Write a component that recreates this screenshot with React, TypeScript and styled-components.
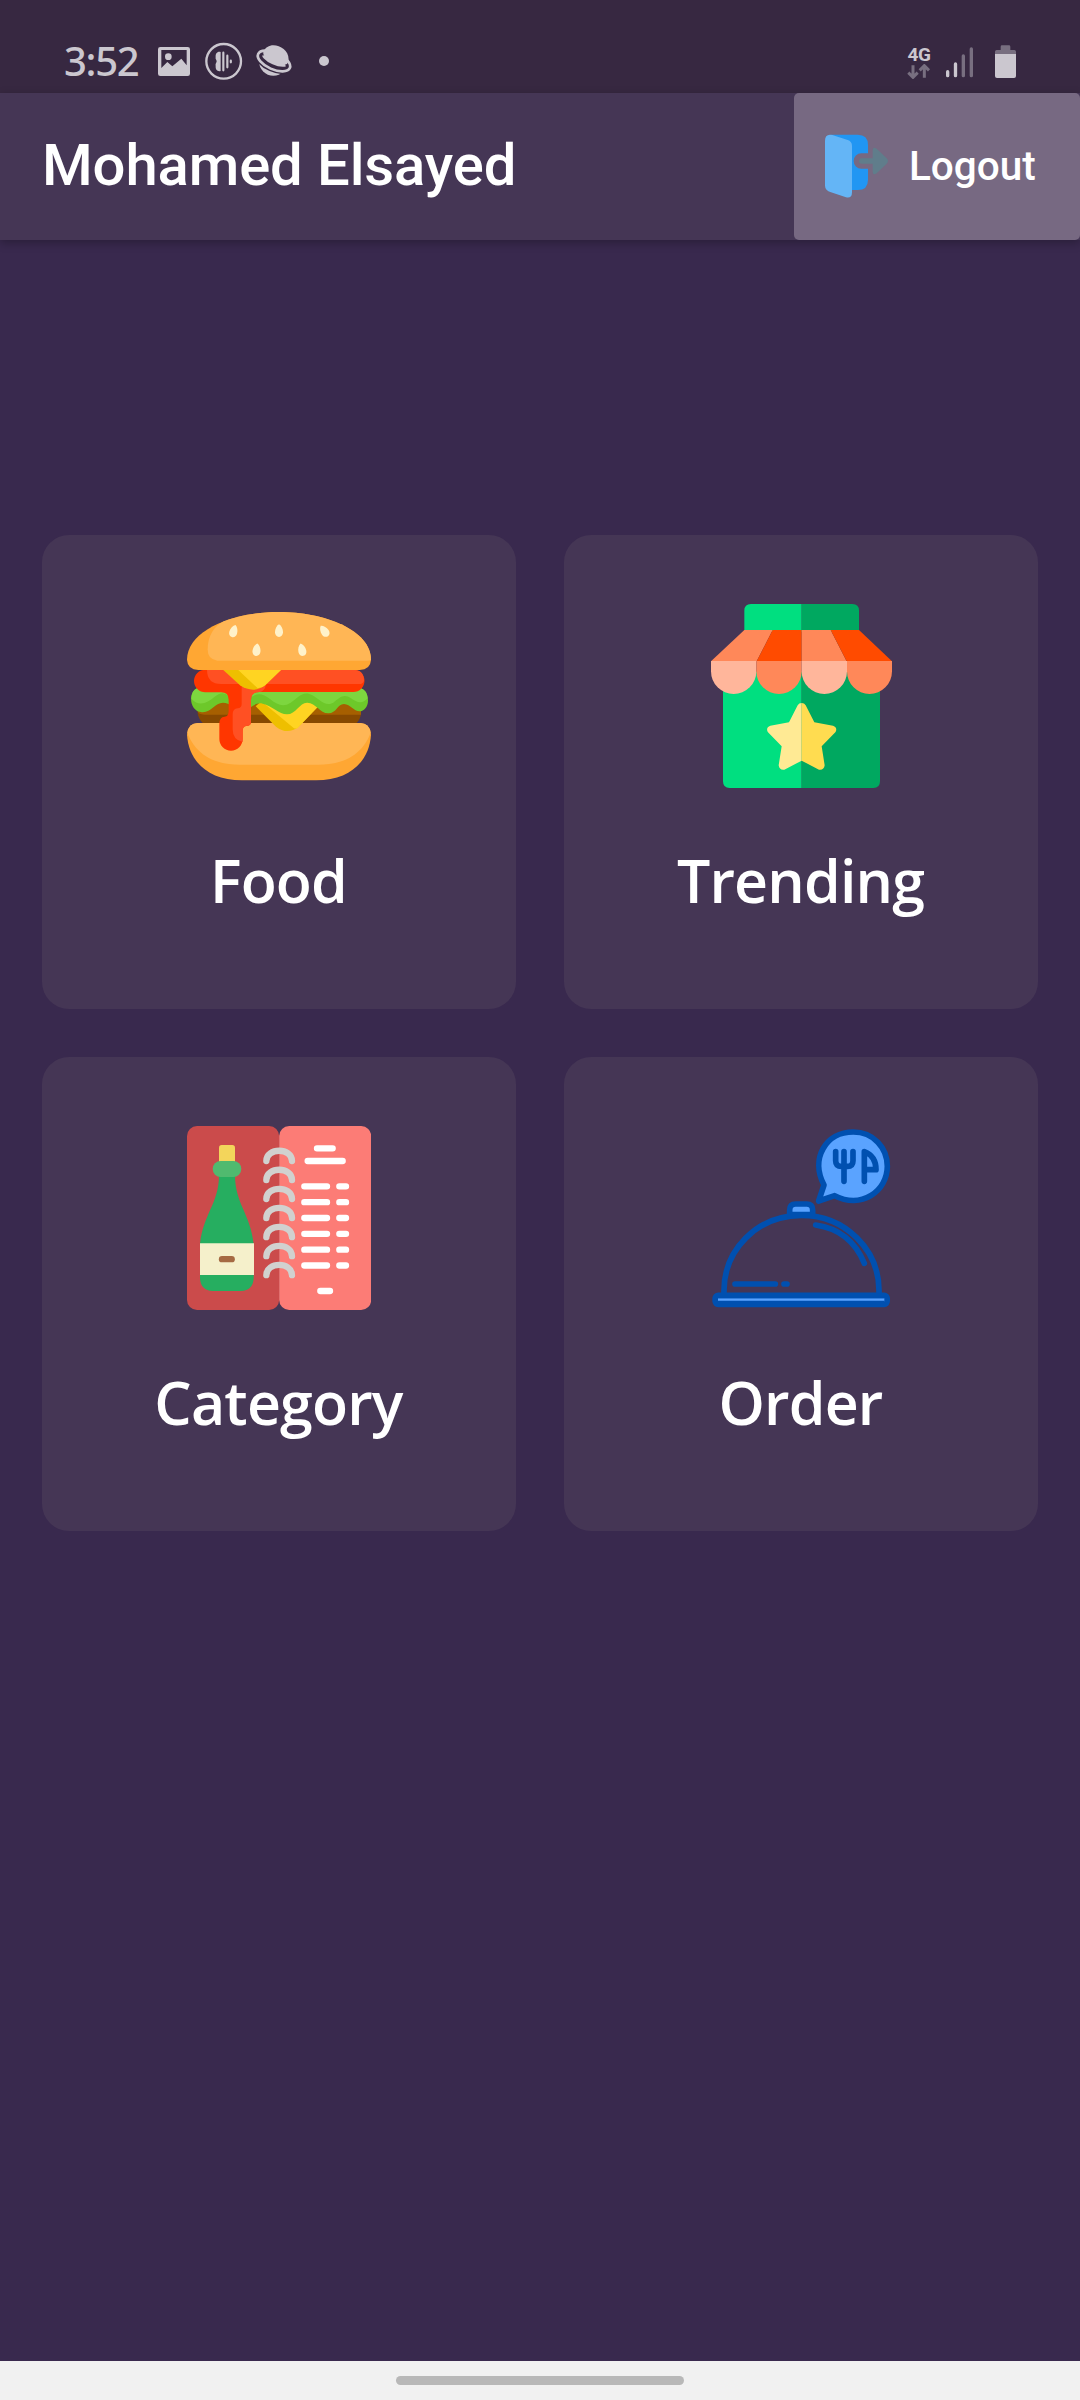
import React from 'react';
import styled, { createGlobalStyle } from 'styled-components';

const Global = createGlobalStyle`
  html, body { margin: 0; padding: 0; background: #39294e; }
  * { box-sizing: border-box; }
`;

const Screen = styled.div`
  width: 1080px;
  height: 2400px;
  display: flex;
  flex-direction: column;
  background: #39294e;
  color: #fff;
  font-family: Roboto, sans-serif;
  overflow: hidden;
`;

const StatusBar = styled.div`
  height: 93px;
  flex: none;
  display: flex;
  justify-content: space-between;
  padding: 30px 63px 0 64px;
  background: #372841;
  color: #cbc7cf;
`;

const StatusGroup = styled.div<{ $gap: number; $height: number }>`
  display: flex;
  align-items: center;
  height: ${(p) => p.$height}px;
  gap: ${(p) => p.$gap}px;
`;

const Clock = styled.span`
  font: 500 40px/40px "Noto Sans", sans-serif;
  letter-spacing: -1.3px;
  width: 74px;
  white-space: nowrap;
`;

const StatusSvg = styled.svg`
  flex: none;
  display: block;
`;

const Network = styled.div`
  display: flex;
  flex-direction: column;
  align-items: center;
  width: 24px;
`;

const NetworkLabel = styled.span`
  font: 700 19px/19px Roboto, sans-serif;
  letter-spacing: -0.4px;
`;

const AppBar = styled.header`
  height: 147px;
  flex: none;
  display: flex;
  align-items: center;
  justify-content: space-between;
  padding-left: 42px;
  background: #453655;
  box-shadow: 0 3px 9px rgba(0, 0, 0, 0.27);
`;

const Title = styled.h1`
  margin: 0;
  padding-bottom: 4px;
  font-size: 58px;
  line-height: 68px;
  font-weight: 500;
  letter-spacing: -0.1px;
  white-space: nowrap;
`;

const LogoutButton = styled.button`
  width: 286px;
  height: 147px;
  border: 0;
  border-radius: 5px;
  padding: 0 0 1px 30px;
  display: flex;
  align-items: center;
  gap: 19px;
  background: #776982;
  color: #fff;
  font: 500 40.5px/48px Roboto, sans-serif;
`;

const Main = styled.main`
  flex: 1;
  padding: 295px 42px 0;
`;

const Grid = styled.div`
  display: grid;
  grid-template-columns: 474px 474px;
  grid-auto-rows: 474px;
  gap: 48px;
`;

const Card = styled.div`
  display: flex;
  flex-direction: column;
  align-items: center;
  padding-top: 69px;
  border-radius: 27px;
  background: #453655;
`;

const CardIcon = styled.svg`
  width: 184px;
  height: 184px;
  flex: none;
`;

const Label = styled.span`
  margin-top: 52px;
  padding-right: 1px;
  font: 600 59px/80px "Open Sans", sans-serif;
  letter-spacing: -0.8px;
`;

const NavBar = styled.div`
  height: 39px;
  flex: none;
  display: flex;
  justify-content: center;
  align-items: center;
  background: #f1f1f1;
`;

const Handle = styled.div`
  width: 288px;
  height: 9px;
  border-radius: 5px;
  background: #b8b8b8;
`;

function LeftStatusIcons() {
  return (
    <StatusSvg width="174" height="42" viewBox="474 120 522 126" fill="#cbc7cf">
      <path fillRule="evenodd" d="M481 141h82q7 0 7 7v73q0 7-7 7h-82q-7 0-7-7v-73q0-7 7-7zM484 150v54l18-18 15 13 27-23 16 20v-46z" />
      <circle cx="505" cy="170" r="10" />
      <circle cx="671" cy="184" r="52" fill="none" stroke="#cbc7cf" strokeWidth="7" />
      <path d="M662 156c-10-3-16 5-15 15-2 5 3 9 3 13s-5 8-3 14c-1 10 5 18 15 15z" />
      <path d="M670 158v53M682 167v35M692.500 182v5" stroke="#cbc7cf" strokeWidth="6.500" strokeLinecap="round" />
      <circle cx="820" cy="184" r="43" />
      <g transform="rotate(24 822 183)">
        <ellipse cx="822" cy="183" rx="50" ry="22" fill="none" stroke="#372841" strokeWidth="22" />
        <ellipse cx="822" cy="183" rx="52" ry="25" fill="none" stroke="#cbc7cf" strokeWidth="8" />
        <path d="M782 172C779 125 860 125 862 172C858 194 787 194 782 172Z" />
      </g>
      <circle cx="972" cy="183" r="15" />
    </StatusSvg>
  );
}

function LogoutIcon() {
  return (
    <StatusSvg width="66" height="66" viewBox="132 400 198 198">
      <path d="M152 405h81q31 0 31 31v25h-20a23 23 0 0 0 0 46h20v33q0 31-31 31h-81z" fill="#2196f3" />
      <path d="M157 406l46 15q13 4 13 18v139q0 19-18 15l-45-15q-18-6-18-20V424q0-23 22-18z" fill="#64b5f6" />
      <path d="M245 476h33v-23q0-14 12-6l30 29q8 8 0 16l-30 29q-12 8-12-6v-23h-33a8 8 0 0 1 0-16z" fill="#607d8b" />
    </StatusSvg>
  );
}

const seed = 'M0-19C7-15 12-5 12 5C12 13 7 19 0 19S-12 13-12 5C-12-5-7-15 0-19Z';

function BurgerIcon() {
  return (
    <CardIcon viewBox="51 42 552 552">
      <path d="M83 335h490v35q0 18-18 34H103q-18-16-20-34z" fill="#874900" />
      <path d="M83 335h490v39H103q-18 0-20-10z" fill="#a65f00" />
      <path d="M83 399h488q30 2 32 35C598 512 542 571 438 571H216C112 571 56 512 51 434Q53 401 83 399Z" fill="#ffa733" />
      <path d="M83 399h488q27 1 31 29C578 493 521 524 445 524H209C133 524 76 493 52 428Q56 400 83 399Z" fill="#ffb655" />
      <path d="M257 349L279 329H424L443 351L385 411Q352 436 318 410Z" fill="#eebf00" />
      <path d="M276 335L300 329H424L443 351L383 414Q377 418 370 413Z" fill="#ffd422" />
      <path d="M81 295C54 308 58 361 92 366C123 371 133 338 159 338Q174 338 187 350L240 353C252 345 263 337 278 341C306 347 327 373 351 373C378 373 389 337 412 338C438 339 449 369 475 370C500 370 501 342 522 342C544 343 552 368 575 363C604 351 597 303 573 295z" fill="#6dc82a" />
      <path d="M81 295Q65 301 64 326C89 353 113 337 133 321Q158 299 176 319L242 324C258 308 278 309 300 327C324 347 342 351 362 338C384 325 398 299 427 316C449 328 464 351 490 338C510 321 522 310 543 325C559 336 576 345 593 325Q591 301 573 295z" fill="#7dd63f" />
      <path d="M106 239H550a33 33 0 0 1 0 67H267q-24 0-24 24v65q0 13-15 13-10 1-10 15v24a35 35 0 0 1-70 0v-46q0-20 16-21 12 0 12-17v-34q0-22-23-22h-47a34 34 0 0 1 0-68z" fill="#ff3600" />
      <path d="M111 239H550q32 0 32 33-3 10-14 10H288q-3 24-24 25-21 1-21 23v65q0 13-15 13-10 1-10 15v33q-30-6-30-38v-45q0-17 15-18 12-1 12-13v-60H154q-43 0-43-43z" fill="#ff5023" />
      <path d="M159 239h174l-47 47q-36 26-76 0z" fill="#eebf00" />
      <path d="M204 239h130l-47 45q-10 10-24 11z" fill="#ffd422" />
      <path d="M327 66C462 66 603 119 603 210Q601 239 569 240H85Q53 239 51 210C51 119 192 66 327 66Z" fill="#ffa733" />
      <path d="M161 94C209 75 266 66 327 66C462 66 603 119 603 210Q600 212 591 212H142Q113 209 113 178Q114 119 161 94Z" fill="#ffb655" />
      <g fill="#fff2ca">
        <path d={seed} transform="translate(191 123) rotate(17)" />
        <path d={seed} transform="translate(327 122)" />
        <path d={seed} transform="translate(463 123) rotate(-35)" />
        <path d={seed} transform="translate(260 179) rotate(7)" />
        <path d={seed} transform="translate(396 179) rotate(-13)" />
      </g>
    </CardIcon>
  );
}

function StoreIcon() {
  return (
    <CardIcon viewBox="57 57 552 552">
      <path d="M99 260h236v349H119q-20 0-20-20zM163 140V77q0-20 20-20h152v83z" fill="#00df80" />
      <path d="M335 260h235v329q0 20-20 20H335zM335 57h152q20 0 20 20v63H335z" fill="#00a860" />
      <path d="M163 135h85l-48 94H63z" fill="#ff8859" />
      <path d="M248 135h87v94H200z" fill="#ff4b00" />
      <path d="M335 135h87l48 94H335z" fill="#ff8859" />
      <path d="M422 135h85l99 94H470z" fill="#ff4b00" />
      <path d="M63 228h136v31a68 68 0 0 1-136 0z" fill="#ffb69b" />
      <path d="M199 228h136v31a68 68 0 0 1-136 0z" fill="#ff8859" />
      <path d="M335 228h136v31a68 68 0 0 1-136 0z" fill="#ffb69b" />
      <path d="M471 228h135v31a67.500 68 0 0 1-135 0z" fill="#ff8859" />
      <path d="M335 354Q327 354 323 361L297 412 241 422Q226 428 234 442L275 484 266 541Q268 556 283 554L335 527Z" fill="#ffea94" />
      <path d="M335 354Q343 354 347 361L373 412 429 422Q444 428 436 442L395 484 404 541Q402 556 387 554L335 527Z" fill="#ffdc50" />
    </CardIcon>
  );
}

function MenuIcon() {
  const rings = [0, 1, 2, 3, 4, 5, 6];
  const rows = [229, 276.5, 324, 371.5, 419, 466.5];
  return (
    <CardIcon viewBox="51 48 552 552">
      <rect x="51" y="48" width="276.500" height="552" rx="30" fill="#cb4b4b" />
      <rect x="327.500" y="48" width="276" height="552" rx="30" fill="#fc7c76" />
      <path d="M147 195h48C195 281 241 311 251 402V505q-2 37-38 38H128q-36-1-38-38V402C100 311 147 281 147 195Z" fill="#26ae60" />
      <path d="M147 155v-42q0-8 8-8h32q8 0 8 8v42z" fill="#f3d55b" />
      <rect x="128" y="153" width="86" height="48" rx="24" fill="#50ba6f" />
      <path d="M90 400h162v95H90z" fill="#f5f0cb" />
      <path d="M156 447.500h29" stroke="#a56a43" strokeWidth="19" strokeLinecap="round" />
      {rings.map((i) => (
        <path key={i} transform={`translate(0 ${i * 57.1})`} d="M289 153C289 112 366 112 366 153" fill="none" stroke="#d1d1cf" strokeWidth="19" strokeLinecap="round" />
      ))}
      <g stroke="#fff" strokeWidth="19" strokeLinecap="round">
        <path d="M441 115h47M413 153h105M451 543h29" />
        {rows.map((y) => <path key={y} d={`M403 ${y}h68M508 ${y}h20`} />)}
      </g>
    </CardIcon>
  );
}

function OrderIcon() {
  return (
    <CardIcon viewBox="57 48 552 552" fill="none" stroke="#0050b0" strokeWidth="17" strokeLinecap="round" strokeLinejoin="round">
      <path d="M386 273L402 225C360 145 408 66 490 66C550 66 592 113 592 169C592 244 514 298 434 257Z" fill="#5aa3ff" />
      <path d="M437 125v27q0 17 18 17h17q17 0 17-17v-27M462 125v89M523 214v-89C546 134 558 152 558 179H523" />
      <path d="M102 551C98 418 204 316 334 316S571 418 567 551" />
      <path d="M299 314v-14q0-18 18-18h33q18 0 18 18v14z" fill="#5aa3ff" />
      <path d="M377 345C446 355 496 394 523 460M135 522h121M282 522h9" />
      <rect x="75.500" y="556" width="516" height="27" rx="9" fill="#5aa3ff" />
      <path d="M84 560h499M84 577h499" strokeWidth="9" strokeLinecap="butt" />
    </CardIcon>
  );
}

const items = [
  { label: 'Food', Icon: BurgerIcon },
  { label: 'Trending', Icon: StoreIcon },
  { label: 'Category', Icon: MenuIcon },
  { label: 'Order', Icon: OrderIcon },
];

export default function App() {
  return (
    <Screen>
      <Global />
      <StatusBar>
        <StatusGroup $gap={20} $height={62}>
          <Clock>3:52</Clock>
          <LeftStatusIcons />
        </StatusGroup>
        <StatusGroup $gap={14} $height={64}>
          <Network>
            <NetworkLabel>4G</NetworkLabel>
            <StatusSvg width="24" height="15" viewBox="384 194 70 45" fill="none" stroke="#786f80" strokeWidth="9">
              <path d="M401 198v36M387 220l14 14 14-14M435 235v-36M421 213l14-14 14 14" />
            </StatusSvg>
          </Network>
          <StatusSvg width="72" height="36" viewBox="495 132 216 108" fill="none" strokeWidth="10" strokeLinecap="round">
            <path d="M503 215v12M526.500 192v35" stroke="#cbc7cf" />
            <path d="M550 168v59M574 147v80" stroke="#786f80" />
            <path d="M645 162v-7q0-5 5-5h12v-10q0-4 4-4h21q4 0 4 4v10h12q5 0 5 5v7z" fill="#786f80" />
            <path d="M645 162h63v66q0 6-6 6h-51q-6 0-6-6z" fill="#cbc7cf" />
          </StatusSvg>
        </StatusGroup>
      </StatusBar>
      <AppBar>
        <Title>Mohamed Elsayed</Title>
        <LogoutButton>
          <LogoutIcon />
          Logout
        </LogoutButton>
      </AppBar>
      <Main>
        <Grid>
          {items.map(({ label, Icon }) => (
            <Card key={label}>
              <Icon />
              <Label>{label}</Label>
            </Card>
          ))}
        </Grid>
      </Main>
      <NavBar>
        <Handle />
      </NavBar>
    </Screen>
  );
}
